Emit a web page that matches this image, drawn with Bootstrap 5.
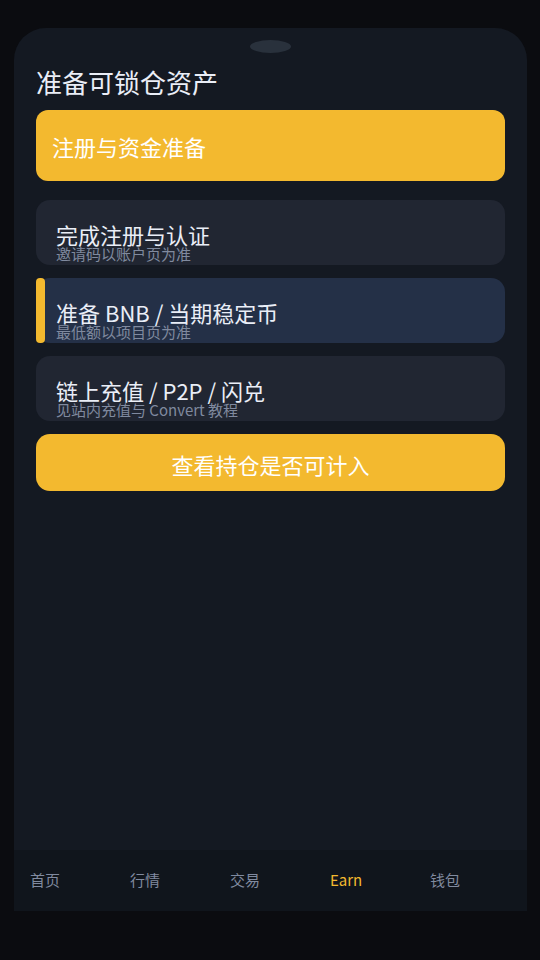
<!DOCTYPE html>
<html lang="zh-CN" data-bs-theme="dark">
<head>
<meta charset="utf-8">
<meta name="viewport" content="width=device-width, initial-scale=1">
<title>准备可锁仓资产</title>
<link href="https://cdn.jsdelivr.net/npm/bootstrap@5.3.0/dist/css/bootstrap.min.css" rel="stylesheet">
<style>
  body {
    background: #0b0c10;
    color: #eaeef7;
    font-family: "Noto Sans CJK SC", sans-serif;
    padding: 28px 13px 49px 14px;
  }
  .panel { background: #141922; border-radius: 32px 32px 0 0; }
  .speaker { width: 41px; height: 13px; border-radius: 50%; background: #29313c; }
  .content { padding: 12px 22px 24px; }
  .page-title { font-size: 26px; line-height: 32px; margin: 13px 0 12px; font-weight: 400; color: #eaeef7; }
  .banner {
    background: #f3b92f; color: #fff; border-radius: 12px;
    font-size: 22px; line-height: 32px; padding: 20px 16px 19px; margin-bottom: 19px;
  }
  .steps { display: grid; gap: 13px; margin-bottom: 13px; }
  .step { background: #212632; border-radius: 14px; padding: 23px 20px 3px; }
  .step-active { background: #243047; }
  .step-active::before {
    content: ""; position: absolute; left: 0; top: 0; bottom: 0;
    width: 9px; border-radius: 4px; background: #f3b92f;
  }
  .step-title { font-size: 22px; line-height: 22px; font-weight: 400; margin: 0 0 1px; color: #eaeef7; }
  .step-note { font-size: 15px; line-height: 16px; color: #808a9f; margin: 0; }
  .btn-check-hold {
    --bs-btn-bg: #f3b92f; --bs-btn-color: #fff; --bs-btn-border-width: 0px;
    --bs-btn-hover-bg: #e5ab22; --bs-btn-hover-color: #fff;
    --bs-btn-active-bg: #d99f18; --bs-btn-active-color: #fff;
    --bs-btn-font-size: 22px; --bs-btn-line-height: 32px;
    --bs-btn-border-radius: 14px;
    padding: 14px 16px 11px;
  }
  .tabs {
    display: grid; grid-template-columns: repeat(5, 1fr); gap: 3px;
    background: #10151c; padding: 18px 0 19px 16px;
  }
  .tabs a { font-size: 15px; line-height: 24px; color: #808a9f; }
  .tabs a.current { color: #f3b92f; }
</style>
<script src="https://cdn.jsdelivr.net/npm/bootstrap@5.3.0/dist/js/bootstrap.bundle.min.js" defer></script>
</head>
<body class="min-vh-100 d-flex flex-column">
<div class="panel flex-grow-1 d-flex flex-column">
  <main class="content flex-grow-1">
    <div class="speaker mx-auto"></div>
    <h1 class="page-title">准备可锁仓资产</h1>
    <div class="banner">注册与资金准备</div>
    <ul class="steps list-unstyled">
      <li class="step">
        <h2 class="step-title">完成注册与认证</h2>
        <p class="step-note">邀请码以账户页为准</p>
      </li>
      <li class="step step-active position-relative">
        <h2 class="step-title">准备 BNB / 当期稳定币</h2>
        <p class="step-note">最低额以项目页为准</p>
      </li>
      <li class="step">
        <h2 class="step-title">链上充值 / P2P / 闪兑</h2>
        <p class="step-note">见站内充值与 Convert 教程</p>
      </li>
    </ul>
    <button type="button" class="btn btn-check-hold w-100">查看持仓是否可计入</button>
  </main>
  <nav class="tabs" aria-label="主导航">
    <a href="#home" class="text-decoration-none">首页</a>
    <a href="#markets" class="text-decoration-none">行情</a>
    <a href="#trade" class="text-decoration-none">交易</a>
    <a href="#earn" class="text-decoration-none current" aria-current="page">Earn</a>
    <a href="#wallet" class="text-decoration-none">钱包</a>
  </nav>
</div>
</body>
</html>
